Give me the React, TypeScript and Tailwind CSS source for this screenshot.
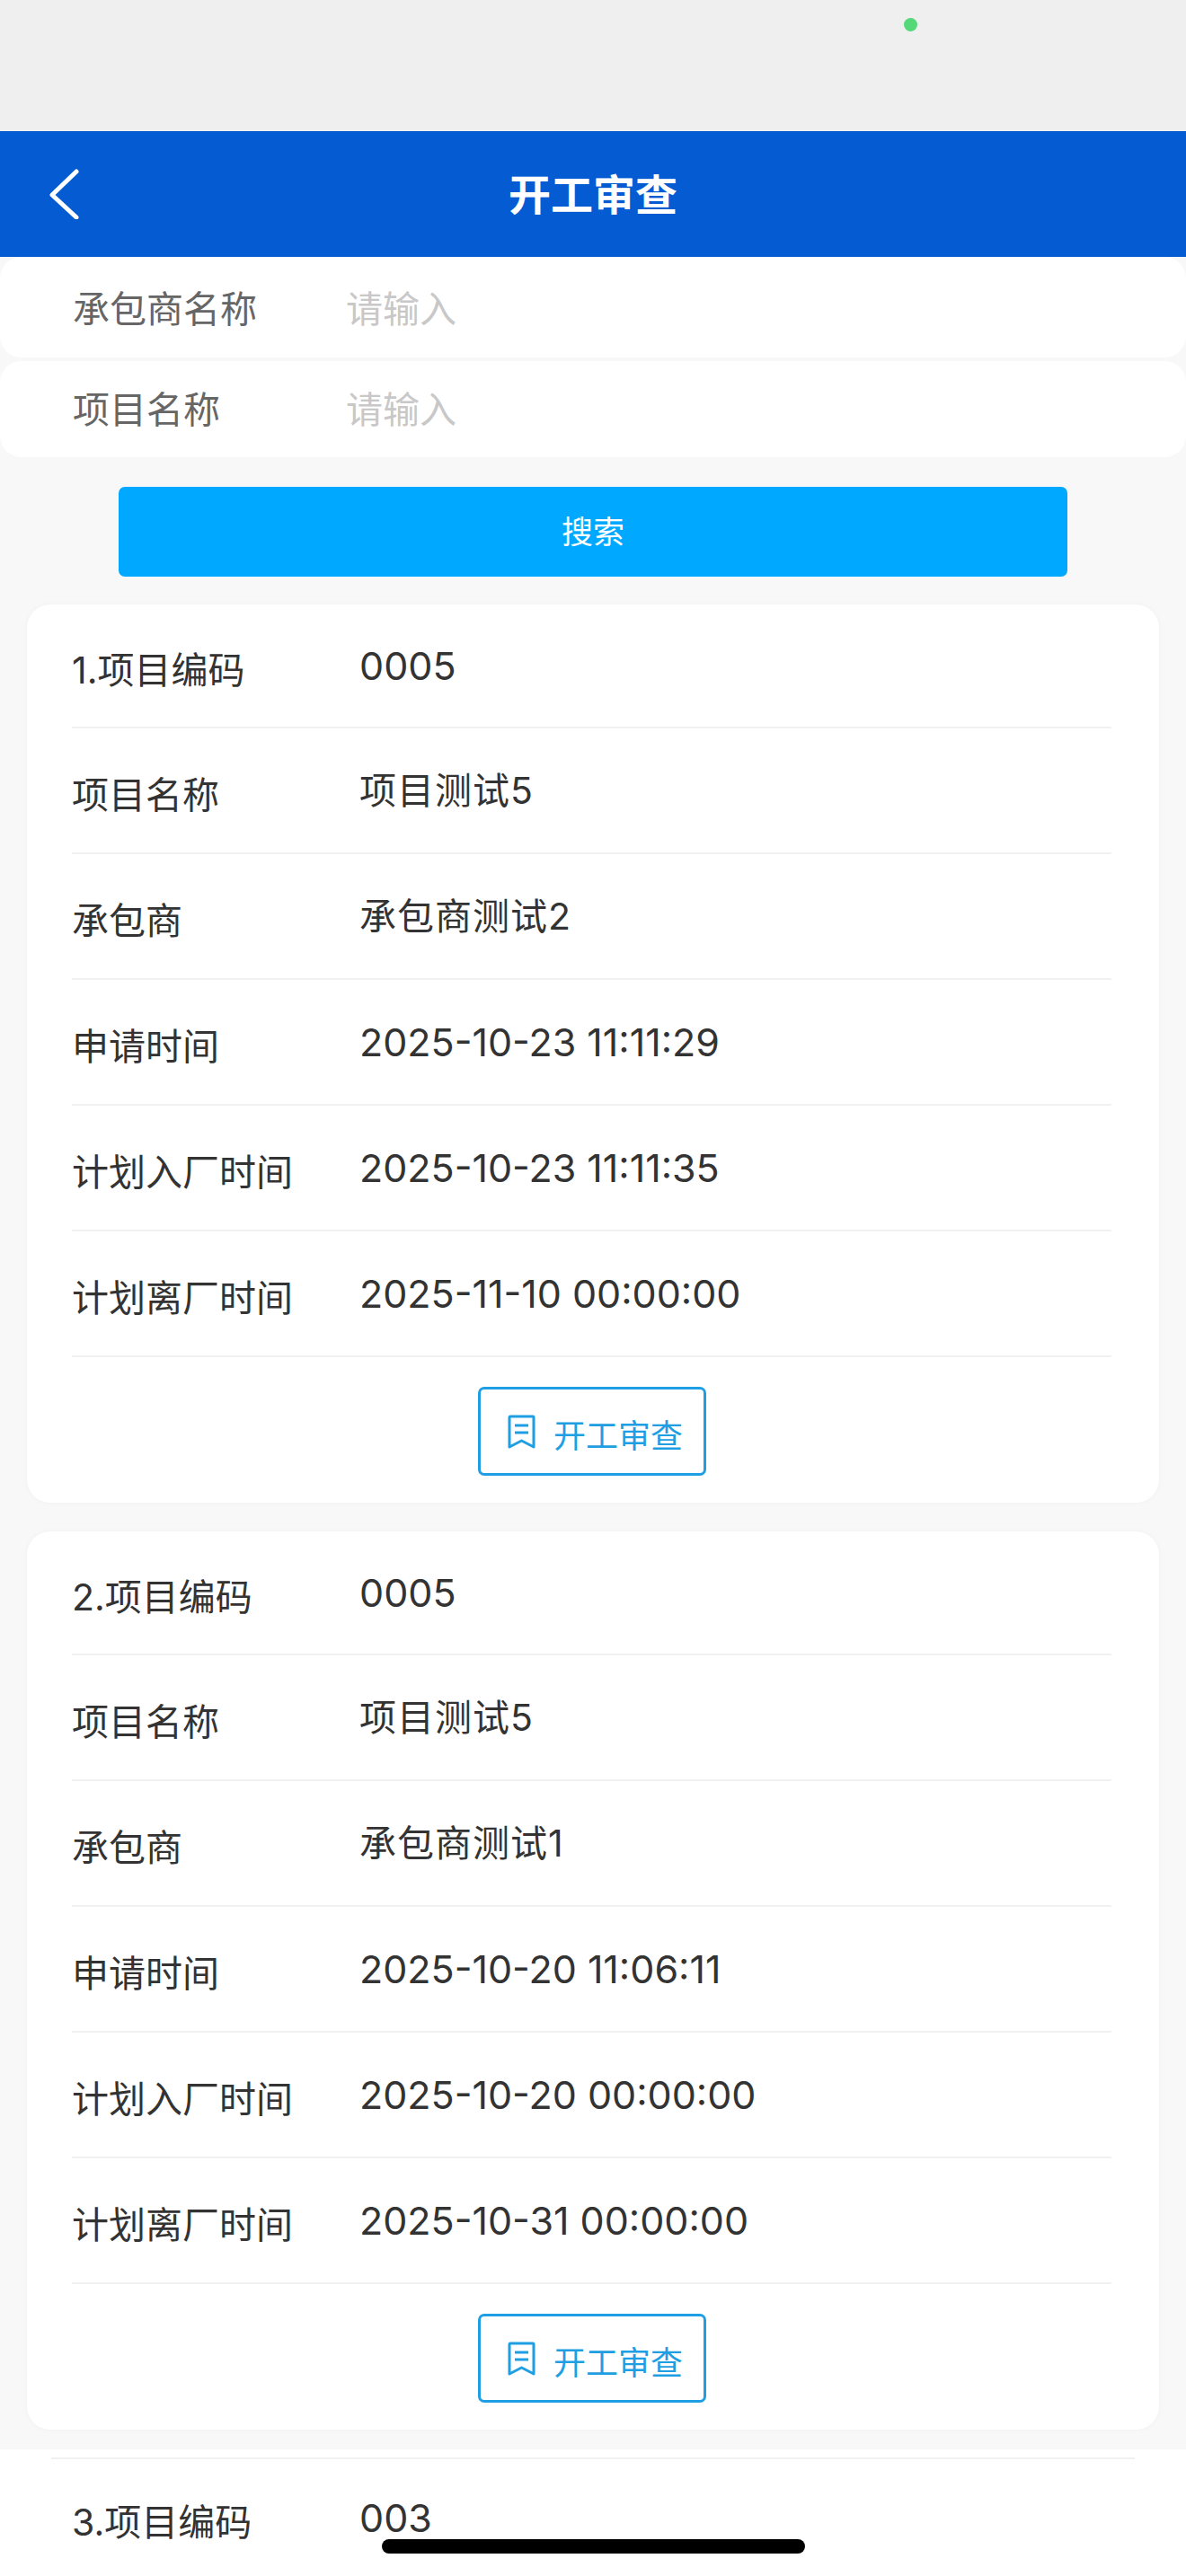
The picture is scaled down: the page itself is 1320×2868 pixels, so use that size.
const records = [
  {
    no: 1,
    code: "0005",
    name: "项目测试5",
    contractor: "承包商测试2",
    applied: "2025-10-23 11:11:29",
    enter: "2025-10-23 11:11:35",
    leave: "2025-11-10 00:00:00",
  },
  {
    no: 2,
    code: "0005",
    name: "项目测试5",
    contractor: "承包商测试1",
    applied: "2025-10-20 11:06:11",
    enter: "2025-10-20 00:00:00",
    leave: "2025-10-31 00:00:00",
  },
];

function Row({ label, value, first, cjk }: { label: string; value: string; first?: boolean; cjk?: boolean }) {
  return (
    <div className={`flex items-center border-b-2 border-[#f1f1f1] ${first ? "h-[138px]" : "h-[140px]"}`}>
      <div className="mt-[10px] w-[320px] text-[41px] leading-[50px] text-[#333333]">{label}</div>
      <div className={`leading-[50px] text-[#333333] ${cjk ? "text-[41px] tracking-[1px]" : "text-[43px]"}`}>{value}</div>
    </div>
  );
}

function SearchField({ label, offset }: { label: string; offset: string }) {
  return (
    <div className={`flex h-full items-center rounded-[24px] bg-white pl-[81px] ${offset}`}>
      <div className="w-[304px] text-[41px] text-[#666666]">{label}</div>
      <input
        placeholder="请输入"
        className="min-w-0 flex-1 bg-transparent text-[41px] outline-none placeholder:text-[#c8c8c8]"
      />
    </div>
  );
}

function ReviewIcon() {
  return (
    <svg width="31" height="38" viewBox="0 0 31 38" fill="none" stroke="#1f9fe3" strokeWidth="3" strokeLinejoin="round">
      <path d="M3 2h25a1 1 0 0 1 1 1v33l-13.500-7-13.500 7V3a1 1 0 0 1 1-1z" />
      <path d="M8 12h15M8 20h15" />
    </svg>
  );
}

export default function App() {
  return (
    <div className="relative h-[2868px] w-[1320px] overflow-hidden bg-[#f8f8f8] font-['Inter','Noto_Sans_CJK_SC',sans-serif]">
      {/* 顶部状态区 */}
      <div className="h-[146px] bg-[#efefef]" />
      <div className="absolute left-[1006px] top-[20px] h-[15px] w-[15px] rounded-full bg-[#55d878]" />

      <header className="relative flex h-[140px] items-center justify-center bg-[#055cd2] pt-[3px]">
        <svg className="absolute left-[54px] top-[42px]" width="36" height="56" viewBox="0 0 36 56" fill="none" stroke="white" strokeWidth="5" strokeLinecap="round" strokeLinejoin="round">
          <path d="M31 3 4 29l27 25" />
        </svg>
        <h1 className="text-[47px] font-bold text-white">开工审查</h1>
      </header>

      {/* 搜索条件 */}
      <div className="h-[112px]"><SearchField label="承包商名称" offset="pt-[5px]" /></div>
      <div className="mt-[4px] h-[107px]"><SearchField label="项目名称" offset="pt-[2px]" /></div>
      <button className="mx-auto mt-[33px] block h-[100px] w-[1056px] rounded-[7px] bg-[#00a8ff] text-[35px] text-white">
        搜索
      </button>

      {/* 列表 */}
      <div className="mt-[31px] px-[30px]">
        {records.map((r) => (
          <section key={r.no} className="mb-[32px] rounded-[26px] bg-white pb-[30px] pl-[50px] pr-[53px] shadow-[0_0_6px_rgba(0,0,0,0.03)]">
            <Row first label={`${r.no}.项目编码`} value={r.code} />
            <Row cjk label="项目名称" value={r.name} />
            <Row cjk label="承包商" value={r.contractor} />
            <Row label="申请时间" value={r.applied} />
            <Row label="计划入厂时间" value={r.enter} />
            <Row label="计划离厂时间" value={r.leave} />
            <button className="mx-auto mt-[33px] flex h-[99px] w-[254px] items-center justify-center gap-[20px] rounded-[7px] border-[3px] border-[#1f9fe3] pl-[8px] text-[36px] text-[#1f9fe3]">
              <ReviewIcon />
              <span className="mt-[10px]">开工审查</span>
            </button>
          </section>
        ))}
      </div>

      {/* 第三条记录，被底部裁切 */}
      <div className="absolute inset-x-0 top-[2727px] h-[141px] bg-white px-[57px] pt-[9px]">
        <div className="h-[2px] bg-[#f1f1f1]" />
        <div className="flex h-[130px] items-center pl-[23px]">
          <div className="mt-[10px] w-[320px] text-[41px] leading-[50px] text-[#333333]">3.项目编码</div>
          <div className="text-[43px] leading-[50px] text-[#333333]">003</div>
        </div>
      </div>

      <div className="absolute left-[425px] top-[2827px] h-[16px] w-[471px] rounded-full bg-black" />
    </div>
  );
}
